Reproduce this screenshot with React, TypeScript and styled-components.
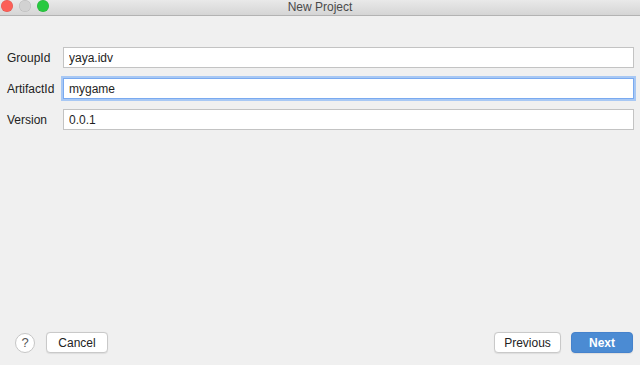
import styled, { createGlobalStyle, css } from 'styled-components';

const GlobalStyle = createGlobalStyle`
    html, body {
        margin: 0;
        padding: 0;
        height: 100%;
        background: #f0f0f0;
        font-family: "Liberation Sans", Arial, Helvetica, sans-serif;
    }
    #root {
        height: 100%;
    }
`;

const Window = styled.div`
    width: 640px;
    height: 365px;
    display: flex;
    flex-direction: column;
    background: #f0f0f0;
    overflow: hidden;
`;

const TitleBar = styled.div`
    height: 15px;
    display: grid;
    grid-template-columns: 1fr auto 1fr;
    align-items: start;
    background: linear-gradient(#e9e9e9, #d5d5d5);
    border-bottom: 1px solid #b3b3b3;
`;

const Lights = styled.div`
    display: flex;
    gap: 6px;
    padding-left: 1px;
`;

const Light = styled.span<{ $color: string }>`
    width: 12px;
    height: 12px;
    border-radius: 50%;
    background: ${(p) => p.$color};
    box-shadow: inset 0 0 0 0.5px rgba(0, 0, 0, 0.12);
`;

const Title = styled.div`
    font-size: 12px;
    line-height: 15px;
    color: #4a4a4a;
`;

const Form = styled.div`
    flex: 1;
    display: grid;
    grid-template-columns: 56px 1fr;
    grid-auto-rows: 21px;
    row-gap: 10px;
    align-content: start;
    padding: 31px 6px 0 7px;
`;

const Label = styled.label`
    font-size: 12px;
    color: #222;
    display: flex;
    align-items: center;
`;

const Field = styled.input<{ $focused?: boolean }>`
    box-sizing: border-box;
    height: 21px;
    width: 100%;
    margin: 0;
    padding: 0 5px;
    border: 1px solid #c3c3c3;
    background: #fff;
    font-family: inherit;
    font-size: 12px;
    color: #1e1e1e;
    outline: none;
    ${(p) =>
        p.$focused &&
        css`
            border-color: #7aaaf0;
            box-shadow: 0 0 0 2px #a8c8f4;
        `}
`;

const Footer = styled.div`
    display: flex;
    align-items: center;
    padding: 0 7px 12px 15px;
`;

const Help = styled.div`
    box-sizing: border-box;
    width: 20px;
    height: 20px;
    border-radius: 50%;
    border: 1px solid #c6c6c6;
    background: #fff;
    color: #555;
    font-size: 13px;
    display: flex;
    align-items: center;
    justify-content: center;
    margin-right: 11px;
`;

const Spacer = styled.div`
    flex: 1;
`;

const Button = styled.button<{ $width: number; $primary?: boolean }>`
    box-sizing: border-box;
    width: ${(p) => p.$width}px;
    height: 21px;
    margin: 0;
    padding: 0;
    border-radius: 4px;
    border: 1px solid #c9c9c9;
    background: #fff;
    color: #222;
    font-family: inherit;
    font-size: 12px;
    box-shadow: 0 0.5px 1px rgba(0, 0, 0, 0.08);
    ${(p) =>
        p.$primary &&
        css`
            background: #4b8bd3;
            border-color: #4582cc;
            color: #fff;
            font-weight: bold;
            margin-left: 10px;
        `}
`;

function App() {
    return (
        <Window>
            <GlobalStyle />
            <TitleBar>
                <Lights>
                    <Light $color="#fc5f57" />
                    <Light $color="#d2d2d2" />
                    <Light $color="#27c93f" />
                </Lights>
                <Title>New Project</Title>
                <div />
            </TitleBar>
            <Form>
                <Label>GroupId</Label>
                <Field defaultValue="yaya.idv" />
                <Label>ArtifactId</Label>
                <Field defaultValue="mygame" $focused />
                <Label>Version</Label>
                <Field defaultValue="0.0.1" />
            </Form>
            <Footer>
                <Help>?</Help>
                <Button $width={62}>Cancel</Button>
                <Spacer />
                <Button $width={67}>Previous</Button>
                <Button $width={62} $primary>Next</Button>
            </Footer>
        </Window>
    );
}

export default App;
